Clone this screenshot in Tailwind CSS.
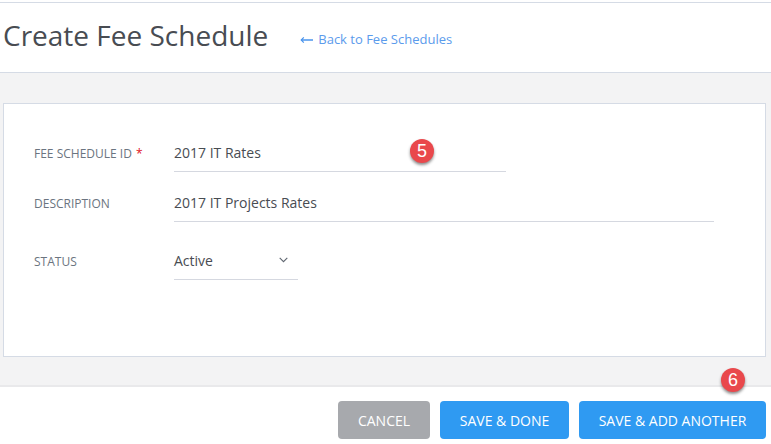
<!DOCTYPE html>
<html lang="en">
<head>
    <meta charset="UTF-8">
    <title>Create Fee Schedule</title>
    <script src="https://cdn.jsdelivr.net/npm/@tailwindcss/browser@4"></script>
</head>
<body class="bg-white font-['Open_Sans',sans-serif]">
    <div class="relative flex h-[444px] w-[771px] flex-col overflow-hidden pt-[2px]">
        <!-- Header -->
        <header class="flex h-[71px] items-center border-y border-[#d5dbe5] bg-white pl-[3px]">
            <h1 class="mt-[-5px] text-[28px] leading-none text-[#484c52]">Create Fee Schedule</h1>
            <a href="#" class="ml-[32px] mt-[5px] flex items-center text-[13px] text-[#5b9bec]">
                <svg class="mr-[5px]" width="13" height="8" viewBox="0 0 13 8" fill="none" stroke="#4a94ec" stroke-width="1.5">
                    <path d="M13 4H1.5"/>
                    <path d="M3.8 1.3 1.2 4l2.6 2.7" stroke-width="1.2"/>
                </svg>
                Back to Fee Schedules
            </a>
        </header>

        <!-- Form -->
        <main class="h-[312px] bg-[#f3f3f4] pl-[3px] pr-[5px] pt-[30px]">
            <form class="h-[254px] border border-[#d5dbe5] bg-white pl-[30px] pt-[34px]">
                <div class="flex h-[34px] items-center">
                    <label class="mt-[-2px] w-[140px] text-[12px] uppercase text-[#6b7480]">Fee Schedule ID <span class="ml-[1px] text-[#e0141c]">*</span></label>
                    <div class="flex h-[34px] w-[332px] items-center border-b border-[#d5d8e0] pb-[5px] text-[14px] text-[#484c52]">2017 IT Rates</div>
                </div>
                <div class="mt-[16px] flex h-[34px] items-center">
                    <label class="mt-[-2px] w-[140px] text-[12px] uppercase text-[#6b7480]">Description</label>
                    <div class="flex h-[34px] w-[540px] items-center border-b border-[#d5d8e0] pb-[5px] text-[14px] text-[#484c52]">2017 IT Projects Rates</div>
                </div>
                <div class="mt-[24px] flex h-[34px] items-center">
                    <label class="mt-[-2px] w-[140px] text-[12px] uppercase text-[#6b7480]">Status</label>
                    <div class="flex h-[34px] w-[124px] items-center justify-between border-b border-[#d5d8e0] pb-[5px] pr-[10px] text-[14px] text-[#484c52]">
                        Active
                        <svg width="9" height="6" viewBox="0 0 9 6" fill="none" stroke="#5f6670" stroke-width="1.1"><path d="M.7.8 4.5 4.6 8.3.8"/></svg>
                    </div>
                </div>
            </form>
        </main>

        <!-- Footer buttons -->
        <footer class="flex flex-1 justify-end gap-[10px] border-t-2 border-[#e9e9eb] bg-white pr-[5px] pt-[14px]">
            <button class="h-[38px] w-[92px] rounded-[4px] bg-[#a7a9ad] text-[14px] text-white">CANCEL</button>
            <button class="h-[38px] w-[129px] rounded-[4px] bg-[#2f9af2] text-[14px] text-white">SAVE &amp; DONE</button>
            <button class="h-[38px] w-[187px] rounded-[4px] bg-[#2f9af2] text-[14px] text-white">SAVE &amp; ADD ANOTHER</button>
        </footer>

        <!-- Callout badges -->
        <div class="absolute left-[410px] top-[139px] flex h-[24px] w-[24px] items-center justify-center rounded-full bg-[#e9484c] font-['Liberation_Sans',sans-serif] text-[18px] text-white shadow-[0_2px_3px_rgba(0,0,0,0.45)]">5</div>
        <div class="absolute left-[721px] top-[368px] flex h-[24px] w-[24px] items-center justify-center rounded-full bg-[#e9484c] font-['Liberation_Sans',sans-serif] text-[18px] text-white shadow-[0_2px_3px_rgba(0,0,0,0.45)]">6</div>
    </div>
</body>
</html>
